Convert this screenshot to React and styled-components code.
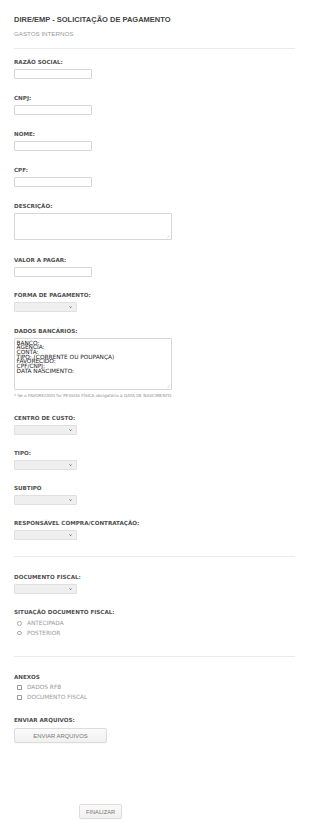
import React from "react";
import styled, { createGlobalStyle } from "styled-components";

const GlobalStyle = createGlobalStyle`
  html, body {
    margin: 0;
    padding: 0;
    background: #ffffff;
  }
  * {
    box-sizing: border-box;
  }
`;

const Page = styled.form`
  width: 310px;
  padding: 16px 15px 20px 14px;
  display: flex;
  flex-direction: column;
  align-items: flex-start;
`;

const Title = styled.h1`
  margin: 0;
  font-family: "Liberation Sans", Arial, sans-serif;
  font-size: 7.5px;
  line-height: 8px;
  font-weight: bold;
  color: #444444;
  white-space: nowrap;
`;

const Subtitle = styled.div`
  margin-top: 5.8px;
  font-family: "Liberation Sans", Arial, sans-serif;
  font-size: 6.2px;
  line-height: 7px;
  color: #999999;
  white-space: nowrap;
`;

const Divider = styled.hr`
  align-self: stretch;
  margin: ${(p) => p.$top}px 0 0 0;
  border: 0;
  border-top: 1px solid #ebebeb;
  height: 0;
`;

const Field = styled.div`
  margin-top: ${(p) => p.$top}px;
  display: flex;
  flex-direction: column;
  align-items: flex-start;
`;

const Label = styled.label`
  display: block;
  margin-bottom: ${(p) => (p.$gap !== undefined ? p.$gap : 4)}px;
  font-family: "DejaVu Sans", Verdana, sans-serif;
  font-size: 5.6px;
  line-height: 6px;
  font-weight: bold;
  color: #505050;
  white-space: nowrap;
`;

const TextInput = styled.input`
  width: 78px;
  height: 10px;
  margin: 0;
  padding: 0 2px;
  border: 1px solid #d6d6d6;
  border-radius: 1px;
  background: #ffffff;
  font-family: "DejaVu Sans", Verdana, sans-serif;
  font-size: 5.6px;
  outline: none;
`;

const AreaWrap = styled.div`
  position: relative;
  width: 158px;
  height: ${(p) => p.$height}px;
`;

const TextArea = styled.textarea`
  display: block;
  width: 100%;
  height: 100%;
  margin: 0;
  padding: 1.6px 1.6px;
  border: 1px solid #d6d6d6;
  border-radius: 1px;
  background: #ffffff;
  font-family: "DejaVu Sans", Verdana, sans-serif;
  font-size: 5.8px;
  line-height: 4.7px;
  color: #1e1e1e;
  resize: none;
  overflow: hidden;
  outline: none;
`;

const Grip = styled.svg`
  position: absolute;
  right: 2px;
  bottom: 2px;
  width: 3px;
  height: 3px;
`;

const SelectBox = styled.div`
  width: 63px;
  height: 9.5px;
  padding-right: 4px;
  display: flex;
  align-items: center;
  justify-content: flex-end;
  border: 1px solid #e0e0e0;
  border-radius: 1px;
  background: #efefef;
`;

const Note = styled.div`
  margin-top: 3px;
  font-family: "DejaVu Sans", Verdana, sans-serif;
  font-size: 4.2px;
  line-height: 5px;
  color: #8a8a8a;
  white-space: nowrap;
`;

const OptionList = styled.div`
  display: flex;
  flex-direction: column;
`;

const OptionRow = styled.div`
  height: ${(p) => p.$height}px;
  padding-left: 3.3px;
  display: flex;
  align-items: center;
  gap: 5px;
  font-family: "DejaVu Sans", Verdana, sans-serif;
  font-size: 5.8px;
  color: #9a9a9a;
  white-space: nowrap;
`;

const Radio = styled.span`
  width: 4.7px;
  height: 4.7px;
  border: 0.6px solid #aaaaaa;
  border-radius: 50%;
  background: #ffffff;
`;

const Check = styled.span`
  width: 4.7px;
  height: 4.7px;
  border: 0.6px solid #9a9a9a;
  border-radius: 0.8px;
  background: #ffffff;
`;

const Button = styled.button`
  margin: ${(p) => p.$top || 0}px 0 0 ${(p) => p.$left || 0}px;
  width: ${(p) => p.$width}px;
  height: 15px;
  padding: 0;
  border: 1px solid #dcdcdc;
  border-radius: 2px;
  background: linear-gradient(#fafafa, #f0f0f0);
  box-shadow: 0 0.5px 0.5px rgba(0, 0, 0, 0.06);
  font-family: "Liberation Sans", Arial, sans-serif;
  font-size: ${(p) => p.$size}px;
  color: #777777;
  cursor: pointer;
`;

const Chevron = () => (
  <svg width="3.2" height="2.2" viewBox="0 0 6 4">
    <polyline points="0.8,0.8 3,3 5.2,0.8" fill="none" stroke="#333" strokeWidth="1.3" />
  </svg>
);

const Select = () => (
  <SelectBox>
    <Chevron />
  </SelectBox>
);

const Area = ({ height, value }) => (
  <AreaWrap $height={height}>
    <TextArea defaultValue={value} readOnly />
    <Grip viewBox="0 0 6 6">
      <line x1="0.5" y1="5.5" x2="5.5" y2="0.5" stroke="#bbb" strokeWidth="0.8" />
      <line x1="3" y1="5.5" x2="5.5" y2="3" stroke="#bbb" strokeWidth="0.8" />
    </Grip>
  </AreaWrap>
);

const bankText = `BANCO:
AGÊNCIA:
CONTA:
TIPO: (CORRENTE OU POUPANÇA)
FAVORECIDO:
CPF/CNPJ:
DATA NASCIMENTO:`;

const App = () => {
  return (
    <>
      <GlobalStyle />
      <Page onSubmit={(e) => e.preventDefault()}>
        <Title>DIRE/EMP - SOLICITAÇÃO DE PAGAMENTO</Title>
        <Subtitle>GASTOS INTERNOS</Subtitle>
        <Divider $top={10.9} />

        <Field $top={10}>
          <Label>RAZÃO SOCIAL:</Label>
          <TextInput type="text" />
        </Field>
        <Field $top={16}>
          <Label>CNPJ:</Label>
          <TextInput type="text" />
        </Field>
        <Field $top={16}>
          <Label>NOME:</Label>
          <TextInput type="text" />
        </Field>
        <Field $top={16}>
          <Label>CPF:</Label>
          <TextInput type="text" />
        </Field>
        <Field $top={16}>
          <Label>DESCRIÇÃO:</Label>
          <Area height={27} value="" />
        </Field>
        <Field $top={17}>
          <Label>VALOR A PAGAR:</Label>
          <TextInput type="text" />
        </Field>
        <Field $top={15.5}>
          <Label>FORMA DE PAGAMENTO:</Label>
          <Select />
        </Field>
        <Field $top={16.3}>
          <Label>DADOS BANCÁRIOS:</Label>
          <Area height={52} value={bankText} />
          <Note>* Se o FAVORECIDO for PESSOA FÍSICA obrigatório a DATA DE NASCIMENTO</Note>
        </Field>
        <Field $top={17.5}>
          <Label>CENTRO DE CUSTO:</Label>
          <Select />
        </Field>
        <Field $top={15.5}>
          <Label>TIPO:</Label>
          <Select />
        </Field>
        <Field $top={15.5}>
          <Label>SUBTIPO</Label>
          <Select />
        </Field>
        <Field $top={15.5}>
          <Label>RESPONSÁVEL COMPRA/CONTRATAÇÃO:</Label>
          <Select />
        </Field>

        <Divider $top={16.5} />

        <Field $top={17}>
          <Label>DOCUMENTO FISCAL:</Label>
          <Select />
        </Field>
        <Field $top={15.5}>
          <Label $gap={3}>SITUAÇÃO DOCUMENTO FISCAL:</Label>
          <OptionList>
            <OptionRow $height={9.6}>
              <Radio />
              ANTECIPADA
            </OptionRow>
            <OptionRow $height={9.6}>
              <Radio />
              POSTERIOR
            </OptionRow>
          </OptionList>
        </Field>

        <Divider $top={18} />

        <Field $top={17}>
          <Label $gap={2.5}>ANEXOS</Label>
          <OptionList>
            <OptionRow $height={10}>
              <Check />
              DADOS RFB
            </OptionRow>
            <OptionRow $height={10}>
              <Check />
              DOCUMENTO FISCAL
            </OptionRow>
          </OptionList>
        </Field>
        <Field $top={15.3}>
          <Label $gap={5}>ENVIAR ARQUIVOS:</Label>
          <Button type="button" $width={93} $size={5.9}>
            ENVIAR ARQUIVOS
          </Button>
        </Field>

        <Button type="submit" $top={61} $left={65} $width={43} $size={5.7}>
          FINALIZAR
        </Button>
      </Page>
    </>
  );
};

export default App;
